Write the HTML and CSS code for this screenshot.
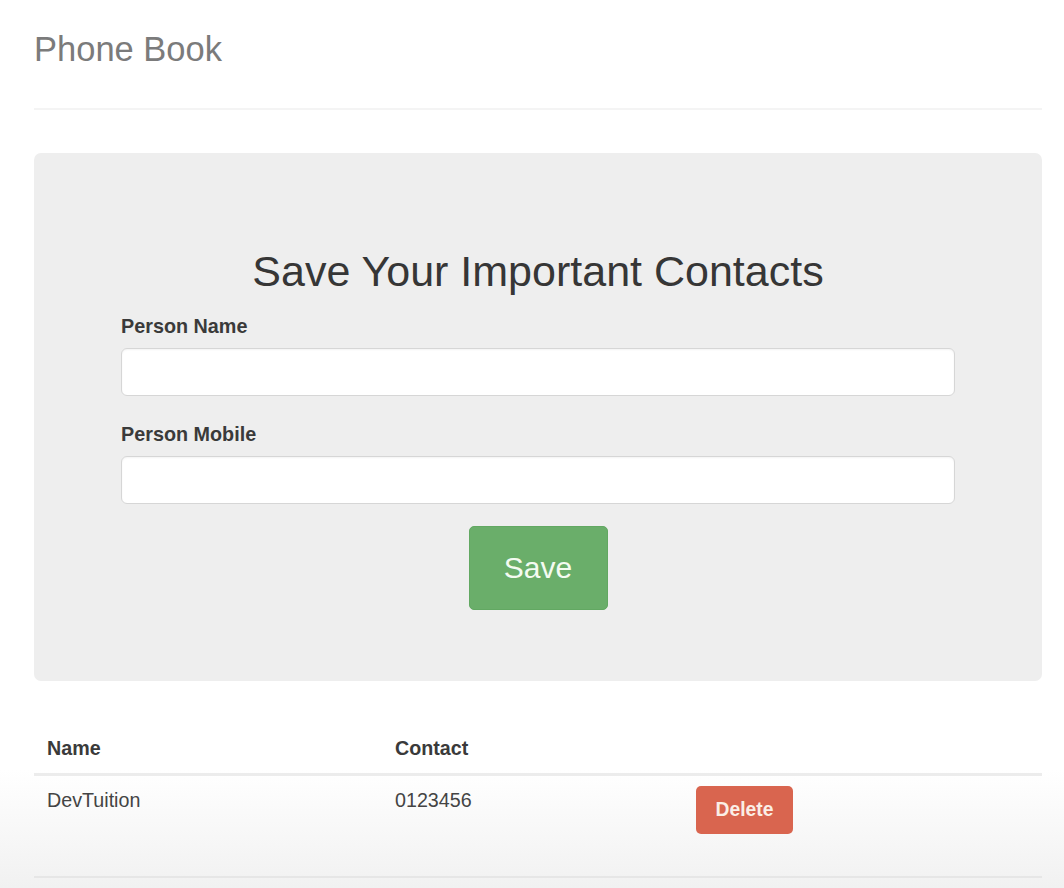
FILE: index.html
```html
<!DOCTYPE html>
<html lang="en">
<head>
<meta charset="utf-8">
<title>Phone Book</title>
<link rel="stylesheet" href="styles.css">
</head>
<body>
<div class="container">
  <div class="page-header">
    <h3 class="brand">Phone Book</h3>
  </div>

  <div class="jumbotron">
    <h2 class="title">Save Your Important Contacts</h2>
    <form class="contact-form">
      <div class="form-group">
        <label class="form-label" for="pname">Person Name</label>
        <input class="form-control" id="pname" type="text">
      </div>
      <div class="form-group">
        <label class="form-label" for="pmobile">Person Mobile</label>
        <input class="form-control" id="pmobile" type="text">
      </div>
      <div class="form-actions">
        <button class="btn btn-save" type="button">Save</button>
      </div>
    </form>
  </div>

  <table class="contacts">
    <thead>
      <tr>
        <th class="col-name">Name</th>
        <th class="col-contact">Contact</th>
        <th class="col-action"></th>
      </tr>
    </thead>
    <tbody>
      <tr>
        <td>DevTuition</td>
        <td>0123456</td>
        <td><button class="btn btn-delete" type="button">Delete</button></td>
      </tr>
    </tbody>
  </table>
</div>
</body>
</html>
```

FILE: styles.css
```css
html, body {
  margin: 0;
  padding: 0;
}

body {
  font-family: "Liberation Sans", Arial, Helvetica, sans-serif;
  color: #333333;
  min-height: 888px;
  background: linear-gradient(to bottom, #ffffff 0, #ffffff 770px, #f1f1f1 888px);
}

.container {
  width: 1008px;
  margin-left: 34px;
}

.page-header {
  padding-top: 27px;
  padding-bottom: 37px;
  border-bottom: 2px solid #f4f4f4;
}

.brand {
  margin: 0;
  font-size: 34.5px;
  line-height: 44px;
  font-weight: normal;
  color: #7b7b7b;
}

.jumbotron {
  margin-top: 43px;
  background: #eeeeee;
  border-radius: 7px;
  padding: 95px 87px 71px;
}

.title {
  margin: 0 0 18px;
  font-size: 43px;
  line-height: 47px;
  font-weight: normal;
  text-align: center;
  color: #363636;
}

.form-group {
  display: flex;
  flex-direction: column;
  margin-bottom: 25px;
}

.form-group + .form-group {
  margin-bottom: 22px;
}

.form-label {
  font-size: 19.8px;
  line-height: 27px;
  font-weight: bold;
  color: #3a3a3a;
  margin-bottom: 8px;
}

.form-control {
  box-sizing: border-box;
  height: 48px;
  width: 100%;
  margin: 0;
  border: 1.5px solid #d6d6d6;
  border-radius: 6px;
  background: #ffffff;
  box-shadow: inset 0 1px 2px rgba(0, 0, 0, 0.05);
  font-family: inherit;
  font-size: 19px;
  padding: 0 16px;
}

.form-actions {
  display: flex;
  justify-content: center;
}

.btn {
  font-family: inherit;
  border: none;
  color: #ffffff;
  cursor: pointer;
}

.btn-save {
  width: 139px;
  height: 84px;
  background: #6aae6a;
  border: 1px solid #62a862;
  border-radius: 5px;
  font-size: 30px;
  color: #f4fbf1;
}

.contacts {
  margin-top: 43px;
  width: 100%;
  border-collapse: collapse;
  font-size: 19.7px;
  line-height: 27px;
}

.contacts th {
  text-align: left;
  font-weight: bold;
  color: #3a3a3a;
  padding: 11px 13px;
  border-bottom: 3px solid #ececec;
}

.contacts td {
  vertical-align: top;
  color: #444444;
  padding: 11px 13px 42px;
  border-bottom: 2px solid #e6e6e6;
}

.col-name {
  width: 322px;
}

.col-contact {
  width: 275px;
}

.btn-delete {
  margin-top: -1px;
  width: 97px;
  height: 48px;
  background: #d9654f;
  border-radius: 5px;
  font-size: 19.3px;
  font-weight: bold;
  color: #fbeee6;
}
```
